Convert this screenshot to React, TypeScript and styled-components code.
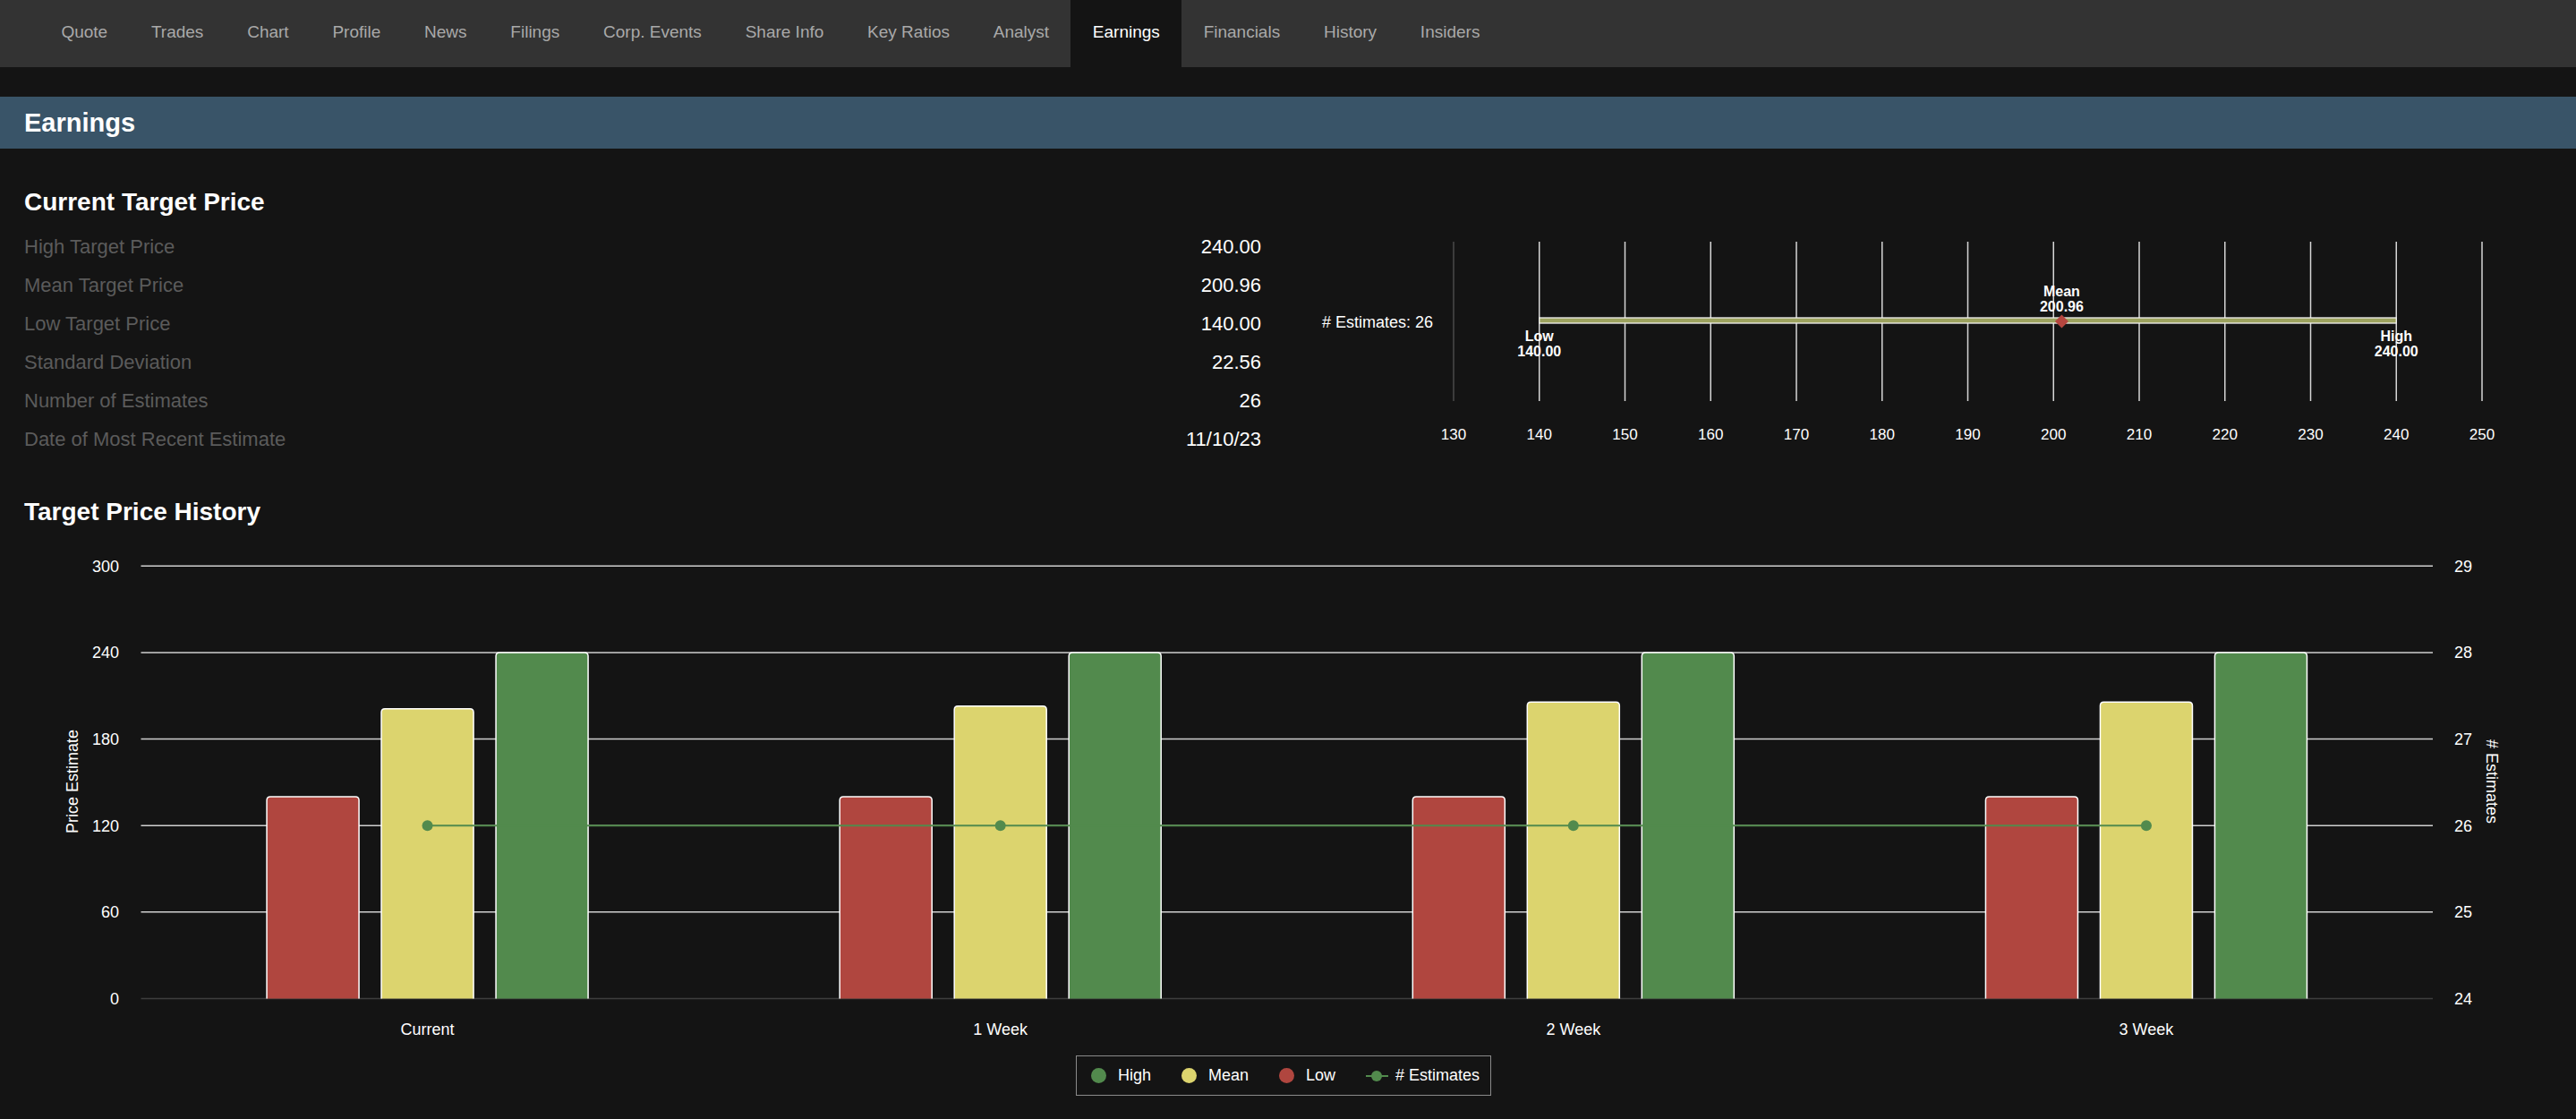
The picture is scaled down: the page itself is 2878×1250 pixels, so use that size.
import React from "react";
import styled, { createGlobalStyle } from "styled-components";

const GlobalStyle = createGlobalStyle`
  html, body { margin: 0; padding: 0; background: #141414; }
  body { font-family: "Liberation Sans", Arial, Helvetica, sans-serif; color: #ffffff; }
`;

const Page = styled.div`
  width: 2878px;
  min-height: 1250px;
  background: #141414;
  display: flex;
  flex-direction: column;
`;

const NavBar = styled.nav`
  display: flex;
  height: 75px;
  background: #333333;
  padding-left: 44px;
`;

const NavItem = styled.a<{ $active?: boolean }>`
  display: flex;
  align-items: center;
  padding: 0 24.4px 4px;
  font-size: 19px;
  text-decoration: none;
  color: ${(p) => (p.$active ? "#ffffff" : "#a9a9a9")};
  background: ${(p) => (p.$active ? "#141414" : "transparent")};
`;

const Banner = styled.header`
  margin-top: 33px;
  height: 58px;
  background: #395468;
  display: flex;
  align-items: center;
  padding: 0 27px;
  font-size: 29px;
  font-weight: bold;
`;

const Content = styled.section`
  padding: 0 27px;
  display: flex;
  flex-direction: column;
`;

const SectionTitle = styled.h2`
  margin: 43px 0 0;
  font-size: 28px;
  line-height: 34px;
  font-weight: bold;
`;

const TargetRow = styled.div`
  display: flex;
  margin-top: 11px;
`;

const StatTable = styled.div`
  width: 1382px;
  display: flex;
  flex-direction: column;
`;

const StatRow = styled.div`
  display: flex;
  justify-content: space-between;
  height: 43px;
  line-height: 43px;
  font-size: 22px;
`;

const StatLabel = styled.span`
  color: #5b5b5b;
`;

const StatValue = styled.span`
  color: #ffffff;
`;

const RangeSvg = styled.svg`
  display: block;
  width: 1440px;
  height: 258px;
`;

const ChartSvg = styled.svg`
  display: block;
  width: 2878px;
  height: 580px;
`;

const SvgText = styled.text<{ $size?: number; $bold?: boolean }>`
  font-family: "Liberation Sans", Arial, Helvetica, sans-serif;
  font-size: ${(p) => p.$size ?? 18}px;
  font-weight: ${(p) => (p.$bold ? "bold" : "normal")};
  fill: #ffffff;
`;

const LegendRow = styled.div`
  display: flex;
  justify-content: center;
  margin-top: 10px;
  padding-right: 10px;
`;

const LegendBox = styled.div`
  box-sizing: border-box;
  height: 45px;
  display: flex;
  align-items: center;
  gap: 34px;
  padding: 0 12px 0 16px;
  border: 1.5px solid #8a8a8a;
`;

const LegendItem = styled.div`
  display: flex;
  align-items: center;
  gap: 13px;
  font-size: 18px;
  color: #ffffff;
`;

const LegendDot = styled.span<{ $color: string }>`
  width: 17px;
  height: 17px;
  border-radius: 50%;
  background: ${(p) => p.$color};
`;

const LegendLine = styled.span`
  position: relative;
  width: 25px;
  height: 2px;
  background: #528a4d;
  margin-right: -5px;
  &::after {
    content: "";
    position: absolute;
    left: 6px;
    top: -5px;
    width: 12px;
    height: 12px;
    border-radius: 50%;
    background: #528a4d;
  }
`;

const RED = "#b0463f";
const YELLOW = "#dcd46e";
const GREEN = "#528a4d";

const navItems = [
  "Quote", "Trades", "Chart", "Profile", "News", "Filings", "Corp. Events",
  "Share Info", "Key Ratios", "Analyst", "Earnings", "Financials", "History", "Insiders",
];

const stats: [string, string][] = [
  ["High Target Price", "240.00"],
  ["Mean Target Price", "200.96"],
  ["Low Target Price", "140.00"],
  ["Standard Deviation", "22.56"],
  ["Number of Estimates", "26"],
  ["Date of Most Recent Estimate", "11/10/23"],
];

/* ---------- Range chart ---------- */
const rx = (v: number) => 215 + (v - 130) * 9.575;

function RangeChart() {
  const ticks: number[] = [];
  for (let v = 130; v <= 250; v += 10) ticks.push(v);
  const mean = 200.96;
  const mx = rx(mean);
  return (
    <RangeSvg viewBox="0 0 1440 258">
      {ticks.map((v) => (
        <line key={v} x1={rx(v)} x2={rx(v)} y1={16} y2={194}
          stroke={v === 130 ? "#4a4a4a" : "#d6d6d6"} strokeWidth={1.5} />
      ))}
      {ticks.map((v) => (
        <SvgText key={"t" + v} $size={17} x={rx(v)} y={231} dy="0.35em" textAnchor="middle">{v}</SvgText>
      ))}
      <rect x={rx(140)} y={101} width={rx(240) - rx(140)} height={6}
        fill="#9da35f" stroke="#f2f2f2" strokeWidth={1.3} />
      <SvgText $size={18} x={192} y={106} dy="0.35em" textAnchor="end"># Estimates: 26</SvgText>
      <SvgText $size={16} $bold x={rx(140)} y={121} dy="0.35em" textAnchor="middle">Low</SvgText>
      <SvgText $size={16} $bold x={rx(140)} y={138} dy="0.35em" textAnchor="middle">140.00</SvgText>
      <SvgText $size={16} $bold x={rx(240)} y={121} dy="0.35em" textAnchor="middle">High</SvgText>
      <SvgText $size={16} $bold x={rx(240)} y={138} dy="0.35em" textAnchor="middle">240.00</SvgText>
      <SvgText $size={16} $bold x={mx} y={71} dy="0.35em" textAnchor="middle">Mean</SvgText>
      <SvgText $size={16} $bold x={mx} y={88.5} dy="0.35em" textAnchor="middle">200.96</SvgText>
      <polygon points={`${mx},${97.5} ${mx + 7.5},${105} ${mx},${112.5} ${mx - 7.5},${105}`} fill="#b5463f" />
    </RangeSvg>
  );
}

/* ---------- History chart ---------- */
const X0 = 157.5;
const X1 = 2718;
const Y0 = 526.5;
const PH = 483.2;
const py = (v: number) => Y0 - (v / 300) * PH;
const ey = (v: number) => Y0 - ((v - 24) / 5) * PH;

const categories = ["Current", "1 Week", "2 Week", "3 Week"];
const means = [200.96, 202.9, 205.6, 205.68];

function barPath(x: number, y: number, w: number, h: number, r: number) {
  return `M${x},${y + h} V${y + r} Q${x},${y} ${x + r},${y} H${x + w - r} Q${x + w},${y} ${x + w},${y + r} V${y + h}`;
}

function HistoryChart() {
  const cw = (X1 - X0) / 4;
  const centers = categories.map((_, i) => X0 + cw * (i + 0.5));
  const bw = 103;
  const gridVals = [0, 60, 120, 180, 240, 300];
  return (
    <ChartSvg viewBox="0 0 2878 580">
      {gridVals.map((v) => (
        <line key={v} x1={X0} x2={X1} y1={py(v)} y2={py(v)}
          stroke={v === 0 ? "#3d3d3d" : "#cfcfcf"} strokeWidth={1.5} />
      ))}
      {gridVals.map((v) => (
        <SvgText key={"l" + v} x={133} y={py(v)} dy="0.35em" textAnchor="end">{v}</SvgText>
      ))}
      {gridVals.map((v, i) => (
        <SvgText key={"r" + v} x={2742} y={py(v)} dy="0.35em" textAnchor="start">{24 + i}</SvgText>
      ))}
      <SvgText x={81} y={284} dy="0.35em" textAnchor="middle" transform="rotate(-90 81 284)">Price Estimate</SvgText>
      <SvgText x={2784} y={284} dy="0.35em" textAnchor="middle" transform="rotate(90 2784 284)"># Estimates</SvgText>
      {centers.map((c, i) => {
        const vals: [number, string][] = [[140, RED], [means[i], YELLOW], [240, GREEN]];
        return (
          <g key={i}>
            {vals.map(([v, col], j) => {
              const x = c + (j - 1) * 128 - bw / 2;
              const y = py(v);
              return (
                <path key={j} d={barPath(x, y, bw, Y0 - y, 4)} fill={col}
                  stroke="#ffffff" strokeWidth={1.5} />
              );
            })}
          </g>
        );
      })}
      <polyline points={centers.map((c) => `${c},${ey(26)}`).join(" ")}
        fill="none" stroke={GREEN} strokeWidth={2} />
      {centers.map((c, i) => (
        <circle key={"d" + i} cx={c} cy={ey(26)} r={6} fill={GREEN} />
      ))}
      {centers.map((c, i) => (
        <SvgText key={"c" + i} x={c} y={561} dy="0.35em" textAnchor="middle">{categories[i]}</SvgText>
      ))}
    </ChartSvg>
  );
}

export default function App() {
  return (
    <>
      <GlobalStyle />
      <Page>
        <NavBar>
          {navItems.map((n) => (
            <NavItem key={n} href="#" $active={n === "Earnings"}>{n}</NavItem>
          ))}
        </NavBar>
        <Banner>Earnings</Banner>
        <Content>
          <SectionTitle>Current Target Price</SectionTitle>
          <TargetRow>
            <StatTable>
              {stats.map(([l, v]) => (
                <StatRow key={l}>
                  <StatLabel>{l}</StatLabel>
                  <StatValue>{v}</StatValue>
                </StatRow>
              ))}
            </StatTable>
            <RangeChart />
          </TargetRow>
          <SectionTitle>Target Price History</SectionTitle>
        </Content>
        <HistoryChart />
        <LegendRow>
          <LegendBox>
            <LegendItem><LegendDot $color={GREEN} />High</LegendItem>
            <LegendItem><LegendDot $color={YELLOW} />Mean</LegendItem>
            <LegendItem><LegendDot $color={RED} />Low</LegendItem>
            <LegendItem><LegendLine /># Estimates</LegendItem>
          </LegendBox>
        </LegendRow>
      </Page>
    </>
  );
}
